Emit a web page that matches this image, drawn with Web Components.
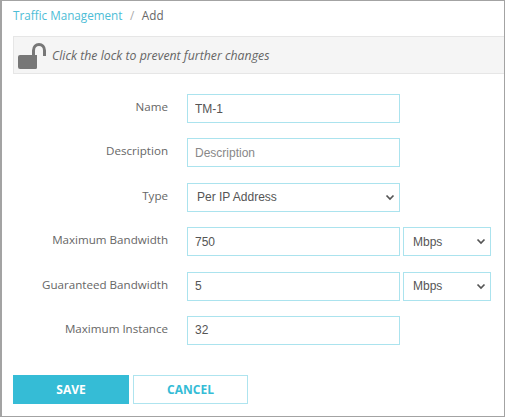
<!DOCTYPE html>
<html>
<head>
<meta charset="utf-8">
<style>
  html, body { margin: 0; padding: 0; background: #fff; }
  body { font-family: "Open Sans", sans-serif; color: #555; }
</style>
</head>
<body>
<tm-page>
  <tm-breadcrumb slot="crumbs" parent="Traffic Management" current="Add"></tm-breadcrumb>
  <tm-lockbar slot="lock">Click the lock to prevent further changes</tm-lockbar>
  <tm-row label="Name"><tm-input value="TM-1"></tm-input></tm-row>
  <tm-row label="Description"><tm-input placeholder="Description"></tm-input></tm-row>
  <tm-row label="Type"><tm-select value="Per IP Address"></tm-select></tm-row>
  <tm-row label="Maximum Bandwidth"><tm-input value="750"></tm-input><tm-select slot="unit" value="Mbps"></tm-select></tm-row>
  <tm-row label="Guaranteed Bandwidth"><tm-input value="5"></tm-input><tm-select slot="unit" value="Mbps"></tm-select></tm-row>
  <tm-row label="Maximum Instance"><tm-input value="32"></tm-input></tm-row>
  <tm-button slot="actions" kind="primary">SAVE</tm-button>
  <tm-button slot="actions">CANCEL</tm-button>
</tm-page>
<script>
class TmPage extends HTMLElement {
    constructor() {
        super();
        this.attachShadow({ mode: 'open' });
        this.shadowRoot.innerHTML = `
            <style>
                :host {
                    display: block;
                    box-sizing: border-box;
                    width: 505px;
                    height: 417px;
                    border: 1px solid #a3a3a3;
                    border-left-width: 2px;
                    overflow: hidden;
                }
                .wrap { padding: 0 0 0 11px; }
                .form {
                    display: flex;
                    flex-direction: column;
                    gap: 15.4px;
                    padding-top: 20px;
                }
                .actions {
                    display: flex;
                    gap: 4px;
                    margin-top: 30px;
                }
            </style>
            <div class="wrap">
                <slot name="crumbs"></slot>
                <slot name="lock"></slot>
                <div class="form"><slot></slot></div>
                <div class="actions"><slot name="actions"></slot></div>
            </div>
        `;
    }
}

class TmBreadcrumb extends HTMLElement {
    constructor() {
        super();
        this.attachShadow({ mode: 'open' });
        this.shadowRoot.innerHTML = `
            <style>
                :host {
                    display: block;
                    height: 35px;
                    font-size: 11.7px;
                    line-height: 29px;
                    color: #666;
                    white-space: nowrap;
                }
                .parent { color: #4dbdd6; }
                .sep { color: #aaa; padding: 0 4.5px; }
            </style>
            <span class="parent"></span> <span class="sep">/</span> <span class="current"></span>
        `;
        this.shadowRoot.querySelector('.parent').textContent = this.getAttribute('parent');
        this.shadowRoot.querySelector('.current').textContent = this.getAttribute('current');
    }
}

class TmLockbar extends HTMLElement {
    constructor() {
        super();
        this.attachShadow({ mode: 'open' });
        this.shadowRoot.innerHTML = `
            <style>
                :host {
                    display: flex;
                    align-items: center;
                    box-sizing: border-box;
                    height: 38px;
                    background: #f5f5f5;
                    border: 1px solid #e6e6e6;
                    border-right: none;
                    padding-left: 4px;
                    gap: 6px;
                    font-size: 12.3px;
                    font-style: italic;
                    color: #666;
                    white-space: nowrap;
                }
                svg { display: block; flex: none; margin-top: 2px; }
            </style>
            <svg width="28" height="26" viewBox="0 0 28 26">
                <path d="M0 14Q0 12 2 12H19V24.500Q19 26 17.500 26H2Q0 26 0 24Z" fill="#777"/>
                <path d="M15.500 13V7.500C15.500 3.500 18 1.500 21 1.500S26.500 3.500 26.500 7.500V13" fill="none" stroke="#777" stroke-width="3"/>
            </svg>
            <span><slot></slot></span>
        `;
    }
}

class TmRow extends HTMLElement {
    constructor() {
        super();
        this.attachShadow({ mode: 'open' });
        this.shadowRoot.innerHTML = `
            <style>
                :host {
                    display: grid;
                    grid-template-columns: 171px 213px 88px;
                    column-gap: 3px;
                    align-items: start;
                    height: 29px;
                }
                .label {
                    padding-right: 16px;
                    text-align: right;
                    font-size: 11.6px;
                    line-height: 25px;
                    color: #666;
                    white-space: nowrap;
                }
            </style>
            <div class="label"></div>
            <div><slot></slot></div>
            <div><slot name="unit"></slot></div>
        `;
        this.shadowRoot.querySelector('.label').textContent = this.getAttribute('label');
    }
}

class TmInput extends HTMLElement {
    constructor() {
        super();
        this.attachShadow({ mode: 'open' });
        this.shadowRoot.innerHTML = `
            <style>
                :host { display: block; }
                input {
                    display: block;
                    box-sizing: border-box;
                    width: 100%;
                    height: 29px;
                    border: 1px solid #abe3ee;
                    border-radius: 0;
                    outline: none;
                    padding: 0 7px;
                    margin: 0;
                    background: #fff;
                    font-family: "Liberation Sans", Arial, sans-serif;
                    font-size: 12px;
                    color: #555;
                }
                input::placeholder { color: #888; opacity: 1; }
            </style>
            <input type="text">
        `;
        const input = this.shadowRoot.querySelector('input');
        input.setAttribute('value', this.getAttribute('value') || '');
        input.placeholder = this.getAttribute('placeholder') || '';
    }
}

class TmSelect extends HTMLElement {
    constructor() {
        super();
        this.attachShadow({ mode: 'open' });
        this.shadowRoot.innerHTML = `
            <style>
                :host {
                    display: flex;
                    align-items: center;
                    justify-content: space-between;
                    box-sizing: border-box;
                    height: 29px;
                    border: 1px solid #abe3ee;
                    padding: 0 4px 0 9px;
                    background: #fff;
                    font-family: "Liberation Sans", Arial, sans-serif;
                    font-size: 12px;
                    color: #555;
                }
                svg { display: block; flex: none; }
            </style>
            <span class="value"></span>
            <svg width="10" height="7" viewBox="0 0 10 7">
                <path d="M1.500 1.500L5 5L8.500 1.500" fill="none" stroke="#555" stroke-width="1.700"/>
            </svg>
        `;
        this.shadowRoot.querySelector('.value').textContent = this.getAttribute('value');
    }
}

class TmButton extends HTMLElement {
    constructor() {
        super();
        this.attachShadow({ mode: 'open' });
        this.shadowRoot.innerHTML = `
            <style>
                :host {
                    display: flex;
                    align-items: center;
                    justify-content: center;
                    box-sizing: border-box;
                    width: 115px;
                    height: 29px;
                    font-size: 12px;
                    font-weight: 700;
                    border: 1px solid #aee4ef;
                    color: #35bcd6;
                    background: #fff;
                }
                :host([kind="primary"]) {
                    width: 116px;
                    background: #35bcd6;
                    border-color: #35bcd6;
                    color: #fff;
                }
            </style>
            <slot></slot>
        `;
    }
}

customElements.define('tm-page', TmPage);
customElements.define('tm-breadcrumb', TmBreadcrumb);
customElements.define('tm-lockbar', TmLockbar);
customElements.define('tm-row', TmRow);
customElements.define('tm-input', TmInput);
customElements.define('tm-select', TmSelect);
customElements.define('tm-button', TmButton);
</script>
</body>
</html>
